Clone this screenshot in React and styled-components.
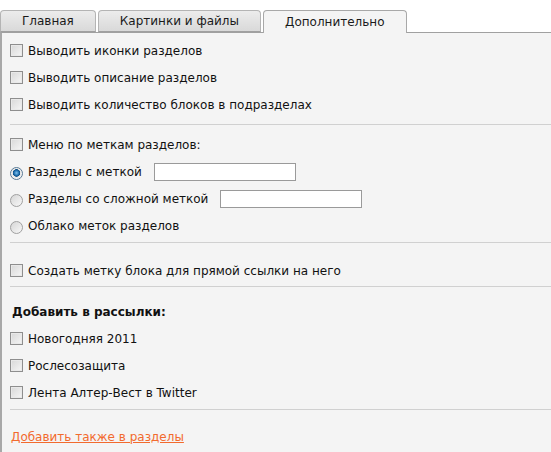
import React from "react"
import styled, { createGlobalStyle } from "styled-components"

const GlobalStyle = createGlobalStyle`
  html, body {
    margin: 0;
    padding: 0;
    background: #fff;
  }
  body {
    font-family: "DejaVu Sans", Verdana, sans-serif;
    font-size: 12px;
    color: #111;
  }
`

const Page = styled.div`
  width: 551px;
  height: 452px;
  padding-top: 10px;
  box-sizing: border-box;
  display: flex;
  flex-direction: column;
`

const TabBar = styled.div`
  display: flex;
  gap: 2px;
  height: 22px;
  align-items: flex-end;
`

const Tab = styled.div`
  height: ${p => (p.active ? "23px" : "22px")};
  padding: 0 21px;
  display: flex;
  align-items: center;
  box-sizing: border-box;
  border: 1px solid ${p => (p.active ? "#a8a8a8" : "#b4b4b4")};
  border-bottom: ${p => (p.active ? "none" : "1px solid #a0a0a0")};
  border-radius: 4px 4px 0 0;
  background: ${p =>
    p.active ? "#f4f4f4" : "linear-gradient(#ececec, #d9d9d9)"};
  color: #1a1a1a;
  margin-bottom: ${p => (p.active ? "-1px" : "0")};
  position: relative;
  z-index: 1;
  white-space: nowrap;
`

const Panel = styled.div`
  flex: 1;
  background: #f4f4f4;
  border-top: 1px solid #a0a0a0;
  border-left: 2px solid #a8a8a8;
`

const Section = styled.div`
  padding: ${p => p.top}px 0 ${p => p.bottom}px 0;
`

const Divider = styled.div`
  height: 1px;
  background: #d0d0d0;
  margin-left: 8px;
`

const Row = styled.label`
  display: flex;
  align-items: center;
  height: 27px;
  padding-left: 8px;
  white-space: nowrap;
`

const CheckBox = styled.span`
  width: 11px;
  height: 11px;
  border: 1px solid #8e8e8e;
  background: linear-gradient(135deg, #d8d8d8, #f6f6f6);
  box-shadow: inset 0 0 0 1px #e9e9e9;
  margin-right: 4px;
  flex-shrink: 0;
`

const Radio = styled.span`
  width: 11px;
  height: 11px;
  border-radius: 50%;
  border: 1px solid ${p => (p.checked ? "#5a7a95" : "#a0a0a0")};
  background: ${p =>
    p.checked
      ? "radial-gradient(circle at 50% 45%, #7fc2f0 0, #1f6fae 2.5px, #0d4f86 3.5px, #e6e6e6 4px, #f8f8f8 6px)"
      : "linear-gradient(135deg, #d6d6d6, #f8f8f8)"};
  margin-right: 4px;
  margin-top: 3px;
  flex-shrink: 0;
`

const Label = styled.span`
  margin-left: 1px;
`

const TextField = styled.input`
  width: 142px;
  height: 18px;
  box-sizing: border-box;
  border: 1px solid #9a9a9a;
  background: #fff;
  margin-left: 12px;
  padding: 0 3px;
  font: inherit;
`

const Heading = styled.div`
  height: 27px;
  display: flex;
  align-items: center;
  padding-left: 10px;
  font-weight: bold;
`

const Link = styled.a`
  display: flex;
  align-items: center;
  height: 27px;
  padding-left: 9px;
  color: #f26a2e;
  text-decoration: underline;
  cursor: pointer;
`

const CheckRow = ({ children }) => (
  <Row>
    <CheckBox />
    <Label>{children}</Label>
  </Row>
)

const RadioRow = ({ checked, input, children }) => (
  <Row>
    <Radio checked={checked} />
    <Label>{children}</Label>
    {input && <TextField type="text" />}
  </Row>
)

export default function App() {
  return (
    <Page>
      <GlobalStyle />
      <TabBar>
        <Tab>Главная</Tab>
        <Tab>Картинки и файлы</Tab>
        <Tab active>Дополнительно</Tab>
      </TabBar>
      <Panel>
        <Section top={4} bottom={6}>
          <CheckRow>Выводить иконки разделов</CheckRow>
          <CheckRow>Выводить описание разделов</CheckRow>
          <CheckRow>Выводить количество блоков в подразделах</CheckRow>
        </Section>
        <Divider />
        <Section top={6} bottom={3}>
          <CheckRow>Меню по меткам разделов:</CheckRow>
          <RadioRow checked input>Разделы с меткой</RadioRow>
          <RadioRow input>Разделы со сложной меткой</RadioRow>
          <RadioRow>Облако меток разделов</RadioRow>
        </Section>
        <Divider />
        <Section top={14} bottom={2}>
          <CheckRow>Создать метку блока для прямой ссылки на него</CheckRow>
        </Section>
        <Divider />
        <Section top={11} bottom={3}>
          <Heading>Добавить в рассылки:</Heading>
          <CheckRow>Новогодняя 2011</CheckRow>
          <CheckRow>Рослесозащита</CheckRow>
          <CheckRow>Лента Алтер-Вест в Twitter</CheckRow>
        </Section>
        <Divider />
        <Section top={13} bottom={0}>
          <Link>Добавить также в разделы</Link>
        </Section>
      </Panel>
    </Page>
  )
}
